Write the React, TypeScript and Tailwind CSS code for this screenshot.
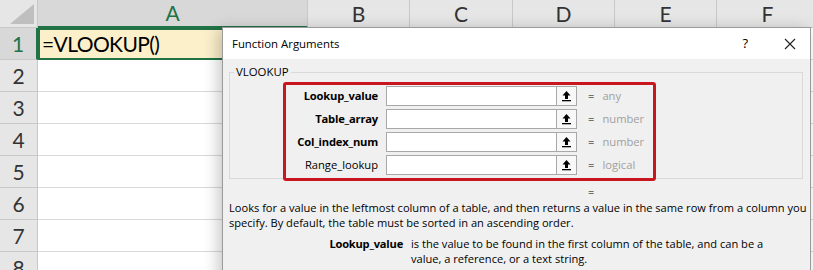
import React from "react";

const UpIcon = () => (
  <svg width="11" height="12" viewBox="0 0 11 12">
    <path d="M5.5 1 L1.5 5.5 H4 V9 H7 V5.5 H9.5 Z" fill="#000" />
    <rect x="1" y="10" width="9" height="1.3" fill="#000" />
  </svg>
);

type Arg = { name: string; bold: boolean; value: string };
const args: Arg[] = [
  { name: "Lookup_value", bold: true, value: "any" },
  { name: "Table_array", bold: true, value: "number" },
  { name: "Col_index_num", bold: true, value: "number" },
  { name: "Range_lookup", bold: false, value: "logical" },
];

const colLetters = ["B", "C", "D", "E", "F"];
const rows = [2, 3, 4, 5, 6, 7, 8];

export default function App() {
  return (
    <div className="relative w-[813px] h-[270px] overflow-hidden bg-white font-['Lato',sans-serif]">
      {/* Spreadsheet grid */}
      <div className="grid grid-cols-[38px_270px_102px_103px_102px_102px_102px] grid-rows-[28px_repeat(8,32px)]">
        {/* corner */}
        <div className="bg-[#e6e6e6] border-r border-b border-[#c8c8c8] flex items-end justify-end pr-[3px] pb-[3px]">
          <svg width="24" height="20" viewBox="0 0 24 20">
            <polygon points="24,0 24,20 0,20" fill="#bfbfbf" />
          </svg>
        </div>
        {/* A header */}
        <div className="bg-[#d8d8d8] border-r border-b-2 border-r-[#c8c8c8] border-b-[#217346] flex items-center justify-center text-[21px] text-[#217346]">
          A
        </div>
        {colLetters.map((c) => (
          <div
            key={c}
            className="bg-[#e6e6e6] border-r border-b border-[#c8c8c8] flex items-center justify-center text-[21px] text-[#333]"
          >
            {c}
          </div>
        ))}

        {/* Row 1 */}
        <div className="bg-[#d8d8d8] border-r-2 border-b border-r-[#217346] border-b-[#c8c8c8] flex items-center justify-center text-[21px] text-[#217346]">
          1
        </div>
        <div className="bg-[#fcf0cb] shadow-[inset_0_0_0_2px_#217346] flex items-center pl-[4px] text-[21px] text-black tracking-[-0.6px]">
          =VLOOKUP()
        </div>
        {colLetters.map((c) => (
          <div key={"r1" + c} className="border-r border-b border-[#d8d8d8]" />
        ))}

        {rows.map((r) => (
          <React.Fragment key={r}>
            <div className="bg-[#e6e6e6] border-r border-b border-[#c8c8c8] flex items-center justify-center text-[21px] text-[#333]">
              {r}
            </div>
            <div className="border-r border-b border-[#d8d8d8]" />
            {colLetters.map((c) => (
              <div key={r + c} className="border-r border-b border-[#d8d8d8]" />
            ))}
          </React.Fragment>
        ))}
      </div>

      {/* Dialog */}
      <div className="absolute left-[222px] top-[27px] w-[589px] h-[260px] bg-[#f0f0f0] border border-[#9a9a9a] shadow-[-4px_2px_14px_rgba(0,0,0,0.22)] font-['Open_Sans',sans-serif] text-[11.1px] text-black">
        {/* title bar */}
        <div className="h-[31px] bg-white flex items-center pl-[9px] pr-[14px]">
          <span className="flex-1 text-[11.4px]">Function Arguments</span>
          <span className="text-[13px] mr-[36px]">?</span>
          <svg width="12" height="12" viewBox="0 0 12 12">
            <path d="M1 1 L11 11 M11 1 L1 11" stroke="#222" strokeWidth="1.1" />
          </svg>
        </div>

        {/* body */}
        <div className="relative pl-[6px] pt-[13px]">
          <div className="relative w-[574px] h-[107px] border border-[#d9d9d9]">
            <span className="absolute -top-[9px] left-[4px] bg-[#f0f0f0] px-[2px] leading-[16px] text-[11.4px]">
              VLOOKUP
            </span>
            <div className="flex flex-col gap-[3px] pt-[13px] text-[11.2px]">
              {args.map((a) => (
                <div key={a.name} className="flex items-center h-[20px]">
                  <span
                    className={
                      a.bold
                        ? "w-[148px] text-right font-bold tracking-[-0.2px]"
                        : "w-[148px] text-right"
                    }
                  >
                    {a.name}
                  </span>
                  <div className="ml-[8px] w-[171px] h-[20px] bg-white border border-[#a8a8a8]" />
                  <div className="w-[20px] h-[20px] bg-[#f8f8f8] border border-l-0 border-[#a8a8a8] flex items-center justify-center">
                    <UpIcon />
                  </div>
                  <span className="ml-[11px]">=</span>
                  <span className="ml-[8px] text-[#a0a0a0]">{a.value}</span>
                </div>
              ))}
            </div>
          </div>

          {/* red highlight */}
          <div className="absolute left-[60px] top-[23px] w-[373px] h-[99px] border-[3px] border-[#c8161e] rounded-[3px] pointer-events-none" />

          <div className="mt-[5px] h-[15px] leading-[15px] pl-[359px]">=</div>
          <div className="mt-[1px] leading-[15px] whitespace-nowrap">
            Looks for a value in the leftmost column of a table, and then returns a value in the same row from a column you
            <br />
            specify. By default, the table must be sorted in an ascending order.
          </div>
          <div className="mt-[6px] flex leading-[15px] whitespace-nowrap">
            <span className="w-[174px] text-right font-bold tracking-[-0.2px]">Lookup_value</span>
            <span className="ml-[8px]">
              is the value to be found in the first column of the table, and can be a
              <br />
              value, a reference, or a text string.
            </span>
          </div>
        </div>
      </div>
    </div>
  );
}
